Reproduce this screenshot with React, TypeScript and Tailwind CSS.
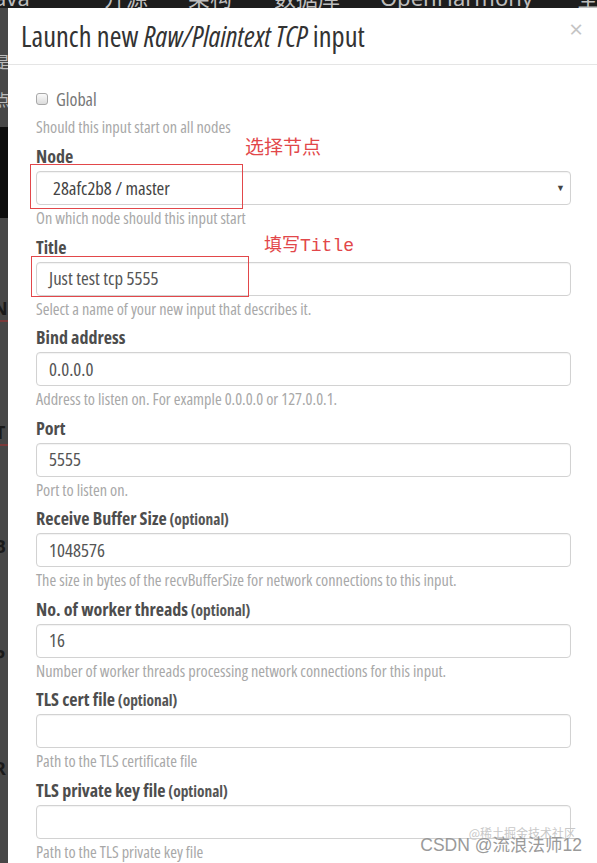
type FieldProps = {
  label: string;
  optional?: boolean;
  value?: string;
  help: string;
  select?: boolean;
  children?: React.ReactNode;
};

function Field({ label, optional, value, help, select, children }: FieldProps) {
  return (
    <div className="relative mb-[9.5px]">
      <label className="block h-[20px] text-[18px] leading-[20px] font-bold text-[#4d4d4d]">
        {label}
        {optional && <span className="text-[15.4px] text-[#555]"> (optional)</span>}
      </label>
      <div className="mt-[5px] flex h-[34px] items-center justify-between rounded-[4px] border border-[#d2d2d2] bg-white pr-[5px] shadow-[inset_0_1px_1px_rgba(0,0,0,0.05)]">
        <span className={select ? "pl-[16px] text-[18.6px] text-[#444]" : "pl-[12px] text-[18.8px] text-[#555]"}>{value}</span>
        {select && <span className="text-[9px] text-[#444] font-stretch-normal">▼</span>}
      </div>
      <p className="mt-[4px] h-[18px] text-[16.3px] leading-[18px] text-[#a8a8a8]">{help}</p>
      {children}
    </div>
  );
}

export default function App() {
  return (
    <div className="relative h-[863px] w-[597px] overflow-hidden bg-white font-['Open_Sans',sans-serif] font-stretch-condensed">
      {/* page behind the modal backdrop */}
      <div className="flex h-[8px] items-end overflow-hidden bg-[#1d1d1d] font-stretch-normal text-[22px] leading-[26px] text-[#bdbdbd]">
        <div className="-mb-[2px] flex gap-[40px] whitespace-nowrap font-['Noto_Sans','Noto_Sans_CJK_SC',sans-serif]">
          <span className="-ml-[6px]">ava</span>
          <span className="ml-[34px]">开源</span>
          <span>架构</span>
          <span className="ml-[2px]">数据库</span>
          <span>OpenHarmony</span>
          <span className="ml-[4px]">全部内容</span>
        </div>
      </div>
      <div className="flex">
        <div className="w-[8px] shrink-0 overflow-hidden bg-[#474747] font-['Noto_Sans','Noto_Sans_CJK_SC',sans-serif] font-stretch-normal text-[#1a1a1a]">
          <div className="mt-[44px] -ml-[6px] text-[16px] leading-[20px] text-[#bbb]">是</div>
          <div className="mt-[18px] -ml-[6px] text-[16px] leading-[20px] text-[#bbb]">点</div>
          <div className="mt-[17px] h-[91px] bg-[#0d0d0d]" />
          <div className="mt-[80px] -ml-[7px] text-[18px] font-bold leading-[20px]">N</div>
          <div className="mt-[2px] h-[2px] bg-[#7a3a3a]" />
          <div className="mt-[100px] -ml-[5px] text-[18px] font-bold leading-[20px]">T</div>
          <div className="mt-[2px] h-[2px] bg-[#7a3a3a]" />
          <div className="mt-[90px] -ml-[6px] text-[18px] font-bold leading-[20px]">B</div>
          <div className="mt-[90px] -ml-[6px] text-[18px] font-bold leading-[20px]">P</div>
          <div className="mt-[92px] -ml-[6px] text-[18px] font-bold leading-[20px]">R</div>
        </div>

        <div className="flex-1 bg-white">
          <div className="flex h-[57px] items-center justify-between border-b border-[#e5e5e5] pl-[13px] pr-[14px]">
            <h4 className="text-[28.5px] leading-[30px] text-[#333]">
              Launch new <em>Raw/Plaintext TCP</em> input
            </h4>
            <span className="-mt-[14px] text-[24px] leading-none text-[#c4c4c4] font-stretch-normal">×</span>
          </div>

          <div className="pl-[28px] pr-[26px] pt-[24px]">
            <div className="flex h-[20px] items-center gap-[8px]">
              <span className="h-[12px] w-[12px] rounded-[3px] border border-[#a8a8a8] bg-gradient-to-b from-[#fafafa] to-[#dcdcdc]" />
              <span className="text-[18px] text-[#777]">Global</span>
            </div>
            <p className="mt-[9px] mb-[10px] h-[18px] text-[16.3px] leading-[18px] text-[#a8a8a8]">
              Should this input start on all nodes
            </p>

            <Field label="Node" value="28afc2b8 / master" help="On which node should this input start" select>
              <div className="absolute left-[-6px] top-[18px] h-[45px] w-[213px] border-[1.5px] border-[#e2474a]" />
              <span className="absolute left-[209px] top-[-11px] font-['Noto_Sans_CJK_SC',sans-serif] font-stretch-normal text-[19px] leading-[22px] text-[#e2474a]">
                选择节点
              </span>
            </Field>
            <Field label="Title" value="Just test tcp 5555" help="Select a name of your new input that describes it.">
              <div className="absolute left-[-5px] top-[19px] h-[41px] w-[218px] border-[1.5px] border-[#e2474a]" />
              <span className="absolute left-[228px] top-[-2px] font-['Liberation_Mono','Noto_Sans_CJK_SC',monospace] font-stretch-normal text-[18px] leading-[22px] text-[#e2474a]">
                填写Title
              </span>
            </Field>
            <Field label="Bind address" value="0.0.0.0" help="Address to listen on. For example 0.0.0.0 or 127.0.0.1." />
            <Field label="Port" value="5555" help="Port to listen on." />
            <Field
              label="Receive Buffer Size"
              optional
              value="1048576"
              help="The size in bytes of the recvBufferSize for network connections to this input."
            />
            <Field
              label="No. of worker threads"
              optional
              value="16"
              help="Number of worker threads processing network connections for this input."
            />
            <Field label="TLS cert file" optional help="Path to the TLS certificate file" />
            <Field label="TLS private key file" optional help="Path to the TLS private key file" />
          </div>
        </div>
      </div>

      {/* watermarks */}
      <div className="absolute right-[21px] top-[826px] font-['Noto_Sans_CJK_SC',sans-serif] font-stretch-normal text-[12px] leading-[14px] text-[#c8c8c8]">
        @稀土掘金技术社区
      </div>
      <div className="absolute right-[15px] top-[834px] font-['Liberation_Sans','Noto_Sans_CJK_SC',sans-serif] font-stretch-normal text-[17.5px] leading-[22px] text-[#9a9a9a]">
        CSDN @流浪法师12
      </div>
    </div>
  );
}
